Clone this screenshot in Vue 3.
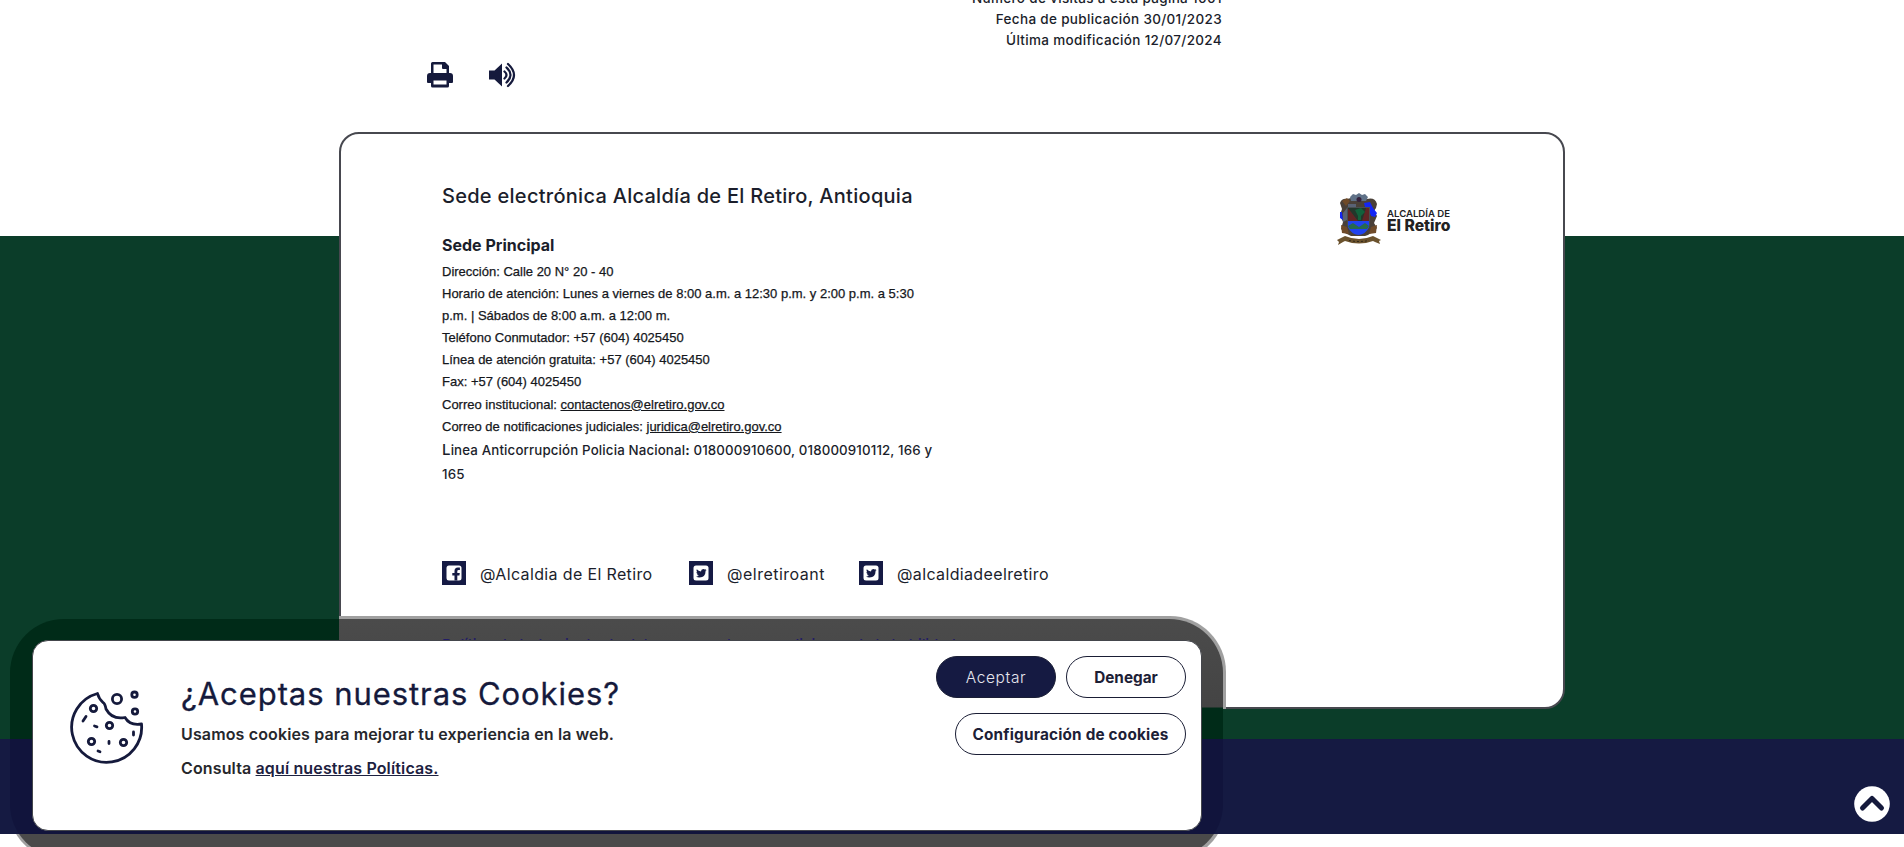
<script setup>
const contact = [
  'Dirección: Calle 20 N° 20 - 40',
  'Horario de atención: Lunes a viernes de 8:00 a.m. a 12:30 p.m. y 2:00 p.m. a 5:30',
  'p.m. | Sábados de 8:00 a.m. a 12:00 m.',
  'Teléfono Conmutador: +57 (604) 4025450',
  'Línea de atención gratuita: +57 (604) 4025450',
  'Fax: +57 (604) 4025450',
]
</script>

<template>
  <div class="page">
    <header class="top">
      <div class="meta">
        <p class="m1">Número de visitas a esta página 1001</p>
        <p class="m2">Fecha de publicación 30/01/2023</p>
        <p class="m3">Última modificación 12/07/2024</p>
      </div>
      <div class="tools">
        <svg width="26" height="26" viewBox="0 0 26 26">
          <path fill="#151a3c" fill-rule="evenodd" d="M4 1.500Q4 0 5.500 0H18l4 4v7h1q3 0 3 3v6q0 1-1 1h-3v3q0 1.500-1.500 1.500H5.500Q4 25.500 4 24v-3H1q-1 0-1-1v-6q0-3 3-3h1zM6.500 2.500v8.500h13V7h-3.500q-1 0-1-1V2.500zM6.500 18.500v4h13v-4z" />
        </svg>
        <svg width="28" height="26" viewBox="0 0 28 26">
          <path fill="#151a3c" d="M1 8.500h5.500L14 1.500v23L6.500 17.500H1z" />
          <path fill="none" stroke="#151a3c" stroke-width="2.300" stroke-linecap="round" d="M16.500 9.500q4 3.500 0 7M18.500 5.500q8 7.500 0 15M20 2q12 11 0 22" />
        </svg>
      </div>
    </header>

    <footer class="foot">
      <section class="card">
        <div class="cardhead">
          <div class="info">
            <h2>Sede electrónica Alcaldía de El Retiro, Antioquia</h2>
            <h3>Sede Principal</h3>
            <p v-for="c in contact" :key="c" class="arial">{{ c }}</p>
            <p class="arial">Correo institucional: <a>contactenos@elretiro.gov.co</a></p>
            <p class="arial">Correo de notificaciones judiciales: <a>juridica@elretiro.gov.co</a></p>
            <p class="line"><span class="big">L</span>inea Anticorrupción Policia Nacional<b>:</b> 018000910600, 018000910112, 166 y</p>
            <p class="line">165</p>
          </div>
          <div class="logo">
            <svg width="44" height="52" viewBox="0 0 44 52">
              <path fill="#4a4038" d="M3 10Q5 5 10 6l4-1L16 2l6 2 6-2 2 4q8-2 10 5l-1 4-2 3 3 5-3 7 3 5-3 3-6 4-3 1H14l-6-3-4-4 2-7-3-7 2-6z" />
              <path fill="#5f7187" d="M13 4l3-3 3 1 3-2 3 2 3-1 3 3-2 4H14z" />
              <circle cx="22" cy="6.500" r="2.500" fill="#33203a" />
              <path fill="#6f4a28" d="M4 32l6 2 2 7-7-1zM40 32l-6 2-2 7 7-1zM5 8l5-3 3 3-4 5z" />
              <path fill="#596274" d="M6 20l4-5v12l-4 2zM11 11h8v3h-8z" />
              <path fill="#1426f5" d="M27 10l6-1 3 6 4 5-2 4-4-1-2-6-4-3zM3 19l2 0 1 8-3-2z" />
              <path fill="#484f50" d="M10 14h23v18q-3 9-11.500 10Q13 41 10 32z" />
              <path fill="#22372b" d="M11 15h21v13H11z" />
              <path fill="#612525" d="M11 15l10 13H11zM29 15h3v13l-7 0z" />
              <path fill="#12623c" d="M18 17l6-2 4 4-4 4v4h-3v-4z" />
              <path fill="#2043ef" d="M11 28h21v6q-3 7-10.500 8Q14 41 11 34z" />
              <path fill="#27694f" d="M11 33l5-3 6 4 6-4 4 3-2 3H13z" />
              <path fill="#6b522d" d="M0 47l4-2 4-2q14 6 28 0l4 2 4 2-2 1 1 3-5-2-2-1q-14 5-28 0l-2 1-5 3 1-3z" />
              <path stroke="#2e2619" stroke-dasharray="2 2" fill="none" d="M12 47.500q10 2 20 0" />
            </svg>
            <div class="logotext"><span>ALCALDÍA DE</span><strong>El Retiro</strong></div>
          </div>
        </div>
        <div class="social">
          <span class="ico"><svg viewBox="0 0 24 24"><rect x="4.500" y="4.500" width="15" height="15" rx="2.500" fill="#fff" /><path fill="#151a44" d="M12.500 19.500v-5h-2.200v-2.500h2.200V10q0-3.500 3.400-3.500h2V9h-1.300q-1.300 0-1.300 1.200V12h2.500l-.4 2.500h-2.100v5z" /></svg></span>
          <span class="s1">@Alcaldia de El Retiro</span>
          <span class="ico"><svg viewBox="0 0 24 24"><rect x="4.500" y="4.500" width="15" height="15" rx="2.500" fill="#fff" /><path fill="#151a44" d="M7 15.500q2 0 2.900-.8-1.500-.3-1.900-1.500h.9Q7.300 12.500 7.400 11l.8.200Q7 9.700 7.800 8.300 9.500 10.300 12 10.500 11.900 8 14.300 7.900q1 0 1.600.6l1.300-.5-.8 1.200 1.200-.3-1 1.200Q16.500 16.500 10.500 16.500 8.500 16.500 7 15.500z" /></svg></span>
          <span class="s2">@elretiroant</span>
          <span class="ico"><svg viewBox="0 0 24 24"><rect x="4.500" y="4.500" width="15" height="15" rx="2.500" fill="#fff" /><path fill="#151a44" d="M7 15.500q2 0 2.900-.8-1.500-.3-1.900-1.500h.9Q7.300 12.500 7.400 11l.8.200Q7 9.700 7.800 8.300 9.500 10.300 12 10.500 11.900 8 14.300 7.900q1 0 1.600.6l1.300-.5-.8 1.200 1.200-.3-1 1.200Q16.500 16.500 10.500 16.500 8.500 16.500 7 15.500z" /></svg></span>
          <span class="s3">@alcaldiadeelretiro</span>
        </div>
        <p class="policy">Política de tratamiento de datos personales y condiciones de la habilidad</p>
      </section>
    </footer>

    <div class="halo"></div>
    <div class="shade"></div>
    <section class="cookies">
      <svg class="cookie" width="74" height="74" viewBox="0 0 74 74" fill="none" stroke="#151a3c" stroke-width="2.800" stroke-linejoin="round">
        <path d="M27.500 3.500A35 35 0 1 0 71.500 34Q60 36 55 27.500 42 30 36 19 35 13.500 33 12.500 29 9 27.500 3.500z" />
        <circle cx="47" cy="9" r="4.600" /><circle cx="64.500" cy="4.700" r="2.700" /><circle cx="65" cy="21.500" r="2.700" />
        <circle cx="23.500" cy="18.500" r="3.200" /><circle cx="39.500" cy="35.500" r="3.200" /><circle cx="21.500" cy="51.500" r="3.200" /><circle cx="53.500" cy="52.500" r="3.200" />
        <path stroke-linecap="round" d="M16 26.500l-3 4.500M24.500 36l2.500.8M63.500 42v3M39 51.500v2M28 61l2 .8" />
      </svg>
      <div class="ctext">
        <h1>¿Aceptas nuestras Cookies?</h1>
        <p class="c1">Usamos cookies para mejorar tu experiencia en la web.</p>
        <p class="c2">Consulta <a>aquí nuestras Políticas.</a></p>
      </div>
      <div class="btns">
        <button class="fill">Aceptar</button><button class="den">Denegar</button>
        <button class="conf">Configuración de cookies</button>
      </div>
    </section>
    <svg class="up" width="36" height="36" viewBox="0 0 36 36"><circle cx="18" cy="18" r="17.800" fill="#fff" /><path d="M8.500 22L18 12.500 27.500 22" fill="none" stroke="#151a3c" stroke-width="5" stroke-linecap="round" stroke-linejoin="round" /></svg>
  </div>
</template>

<style>
html, body { margin: 0; overflow: hidden; background: #fff; }
</style>

<style scoped>
* { box-sizing: border-box; }
p, h1, h2, h3 { margin: 0; font-weight: 500; white-space: nowrap; }
.page { position: relative; width: 1904px; height: 847px; overflow: hidden; font-family: Inter, "Noto Sans", sans-serif; color: #1b1e2b; background: #fff; }
.top { display: flow-root; height: 132px; padding: 0 682px 0 427px; }
.meta { height: 63px; margin-top: -12px; text-align: right; font-size: 13.500px; line-height: 21px; letter-spacing: .33px; }
.tools { display: flex; gap: 35px; margin-top: 11px; }
.foot { height: 702px; padding-left: 339px; background: linear-gradient(#fff 104px, #0b3d29 104px 607px, #151a42 607px); }
.card { width: 1226px; height: 577px; border: 2px solid #47484f; border-radius: 20px; background: #fff; padding: 49px 0 0 101px; }
.cardhead { display: flex; height: 378px; }
.info { width: 895px; }
h2 { font-size: 20px; line-height: 26px; letter-spacing: .28px; }
h3 { font-size: 16px; font-weight: 700; line-height: 24px; margin: 24px 0 4px; }
.arial { font: 13px/22.100px "Liberation Sans", Arial, sans-serif; -webkit-text-stroke: .25px; color: #15171c; }
.line { font-size: 13.300px; line-height: 24px; letter-spacing: .14px; }
.big { font-size: 15px; }
a { text-decoration: underline; }
.logo { display: flex; gap: 6px; padding-top: 10px; height: 64px; }
.logotext { display: flex; flex-direction: column; color: #222; padding-top: 15px; }
.logotext span { font-size: 9.600px; line-height: 11px; font-weight: 600; white-space: nowrap; }
.logotext strong { font-size: 15.700px; line-height: 14px; font-weight: 800; white-space: nowrap; }
.social { display: flex; height: 24px; font-size: 16px; line-height: 26px; white-space: nowrap; letter-spacing: .36px; }
.ico { width: 24px; height: 24px; background: #151a44; margin-right: 14px; flex: none; }
.ico svg { display: block; }
.s1 { width: 209px; }
.s2 { width: 132px; letter-spacing: .5px; }
.policy { position: relative; z-index: 1; margin-top: 48px; font-size: 15px; line-height: 24px; letter-spacing: -.1px; color: #221c66; }
.halo, .shade { position: absolute; }
.halo { left: 8px; top: 616px; width: 1218px; height: 245px; border-radius: 56px; background: linear-gradient(#0b3d29, #0b3d29) 0 0 / 331px 123px no-repeat, linear-gradient(#a0a0a0 93px, #0b3d29 93px 123px, #151a42 123px 218px, #a0a0a0 218px); }
.shade { left: 10px; top: 619px; width: 1213px; height: 239px; border-radius: 54px; background: linear-gradient(#002b18, #002b18) 0 0 / 329px 120px no-repeat, linear-gradient(#4b4b4b, #444 88px, #002b18 89px 120px, #11143c 120px 215px, #4a4a4a 215px); }
.cookies { position: absolute; z-index: 2; left: 32px; top: 640px; width: 1170px; height: 191px; border: 1px solid #44464c; border-radius: 16px; background: #fff; display: flex; padding: 15px 15px 0 37px; }
.cookie { flex: none; margin-top: 34px; }
.ctext { flex: 1; padding: 20px 0 0 37px; }
h1 { font-size: 31px; line-height: 36px; font-weight: 400; color: #151a3c; letter-spacing: .93px; -webkit-text-stroke: .3px; }
.ctext p { font-size: 16px; line-height: 34px; font-weight: 600; color: #26272c; letter-spacing: .14px; }
.ctext .c1 { margin-top: 5px; }
.ctext a { color: #1d2140; }
.btns { width: 254px; display: flex; flex-wrap: wrap; justify-content: flex-end; gap: 15px 10px; align-content: flex-start; }
button { height: 42px; border: 1px solid #1a1e35; border-radius: 21px; background: #fff; font: 700 15.300px Inter, sans-serif; color: #1c2036; padding: 0; white-space: nowrap; width: 120px; }
.fill { background: #151a42; color: #e6e6ee; font-weight: 300; font-size: 15.500px; letter-spacing: .6px; }
.conf { width: 231px; letter-spacing: .2px; }
.up { position: absolute; left: 1854px; top: 786px; }
</style>
